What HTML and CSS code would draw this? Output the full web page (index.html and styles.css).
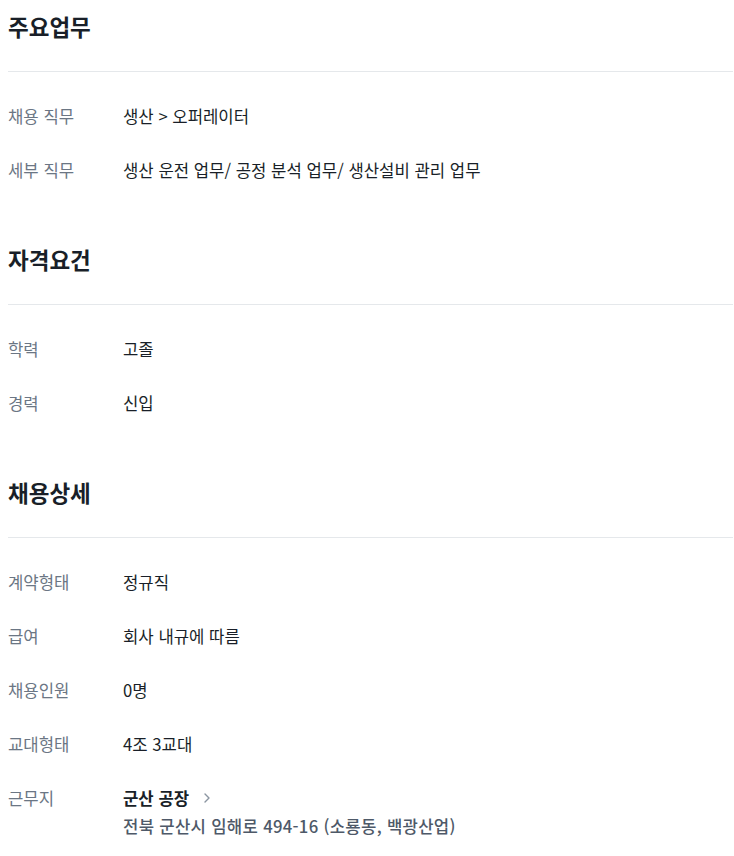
FILE: index.html
```html
<!DOCTYPE html>
<html lang="ko">
<head>
<meta charset="utf-8">
<link rel="stylesheet" href="styles.css">
</head>
<body>
<div class="page">
  <section class="section">
    <h2 class="title">주요업무</h2>
    <dl class="rows">
      <div class="row"><dt>채용 직무</dt><dd>생산 &gt; 오퍼레이터</dd></div>
      <div class="row"><dt>세부 직무</dt><dd>생산 운전 업무/ 공정 분석 업무/ 생산설비 관리 업무</dd></div>
    </dl>
  </section>
  <section class="section">
    <h2 class="title">자격요건</h2>
    <dl class="rows">
      <div class="row"><dt>학력</dt><dd>고졸</dd></div>
      <div class="row"><dt>경력</dt><dd>신입</dd></div>
    </dl>
  </section>
  <section class="section">
    <h2 class="title">채용상세</h2>
    <dl class="rows">
      <div class="row"><dt>계약형태</dt><dd>정규직</dd></div>
      <div class="row"><dt>급여</dt><dd>회사 내규에 따름</dd></div>
      <div class="row"><dt>채용인원</dt><dd>0명</dd></div>
      <div class="row"><dt>교대형태</dt><dd>4조 3교대</dd></div>
      <div class="row"><dt>근무지</dt><dd>
        <div class="place">군산 공장
          <svg class="chev" width="8" height="12" viewBox="0 0 8 12"><path d="M2 2l4 4-4 4" fill="none" stroke="#8b95a1" stroke-width="1.4" stroke-linecap="round" stroke-linejoin="round"/></svg>
        </div>
        <div class="addr">전북 군산시 임해로 494-16 (소룡동, 백광산업)</div>
      </dd></div>
    </dl>
  </section>
</div>
</body>
</html>
```

FILE: styles.css
```css
html, body {
  margin: 0;
  padding: 0;
  background: #fff;
}
body {
  font-family: "Noto Sans CJK KR", "Noto Sans", sans-serif;
  color: #191f28;
}
.page {
  padding: 10px 1px 0 8px;
}
.section + .section {
  margin-top: 61px;
}
.title {
  margin: 0;
  font-size: 22.5px;
  line-height: 32px;
  font-weight: 700;
  padding-bottom: 29px;
  border-bottom: 1px solid #e5e8eb;
}
.rows {
  margin: 32px 0 0;
  display: flex;
  flex-direction: column;
  gap: 30px;
}
.row {
  display: flex;
  align-items: flex-start;
}
.row dt {
  width: 115px;
  flex: none;
  font-size: 16.7px;
  line-height: 24px;
  color: #6b7684;
}
.row dd {
  margin: 0;
  font-size: 16.7px;
  line-height: 24px;
  color: #191f28;
}
.place {
  display: flex;
  align-items: center;
  gap: 14px;
  font-weight: 700;
}
.chev {
  display: block;
}
.addr {
  margin-top: 4px;
  color: #4e5968;
  font-weight: 500;
  letter-spacing: 0.3px;
}
```
